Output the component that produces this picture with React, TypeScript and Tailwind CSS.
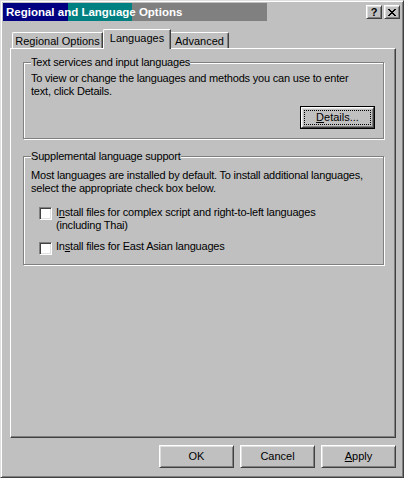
const raised =
  "border border-t-white border-l-white border-r-[#404040] border-b-[#404040] shadow-[inset_1px_1px_0_#dfdfdf,inset_-1px_-1px_0_#808080]";

function PushButton({ children, isDefault }: { children: React.ReactNode; isDefault?: boolean }) {
  if (isDefault) {
    return (
      <div className="w-[75px] h-[23px] border border-black">
        <div className={`h-full w-full ${raised} p-[2px]`}>
          <div className="h-full w-full border border-dotted border-black flex items-center justify-center text-[11px] leading-[13px]">
            {children}
          </div>
        </div>
      </div>
    );
  }
  return (
    <div className={`w-[75px] h-[23px] ${raised} flex items-center justify-center text-[11px] leading-[13px]`}>
      {children}
    </div>
  );
}

function CheckBox() {
  return (
    <div className="w-[13px] h-[13px] shrink-0 bg-white border border-t-[#808080] border-l-[#808080] border-r-white border-b-white shadow-[inset_1px_1px_0_#404040,inset_-1px_-1px_0_#dfdfdf]" />
  );
}

export default function App() {
  return (
    <div className="w-[404px] h-[478px] bg-[#c0c0c0] border border-t-[#dfdfdf] border-l-[#dfdfdf] border-r-[#404040] border-b-[#404040] shadow-[inset_1px_1px_0_#fff,inset_-1px_-1px_0_#808080] p-[2px] overflow-hidden font-['Liberation_Sans',Arial,sans-serif] text-black">
      {/* Title bar */}
      <div className="h-[18px] flex items-center bg-[linear-gradient(to_right,#000080_0px,#000080_65px,#008080_65px,#008080_129px,#808080_129px,#808080_264px,#c0c0c0_264px)]">
        <span className="ml-[3px] text-white font-bold text-[11.5px] leading-[14px]">Regional and Language Options</span>
        <div className="ml-auto mr-[1px] flex gap-[2px]">
          <div className={`w-[16px] h-[14px] ${raised} flex items-center justify-center font-bold text-[11px] leading-none pt-px`}>?</div>
          <div className={`w-[16px] h-[14px] ${raised} flex items-center justify-center`}>
            <svg width="8" height="7" viewBox="0 0 8 7" shapeRendering="crispEdges">
              <path d="M0 0h2v1h-2zM6 0h2v1h-2zM1 1h2v1h-2zM5 1h2v1h-2zM2 2h4v1h-4zM3 3h2v1h-2zM2 4h4v1h-4zM1 5h2v1h-2zM5 5h2v1h-2zM0 6h2v1h-2zM6 6h2v1h-2z" fill="#000" />
            </svg>
          </div>
        </div>
      </div>

      <div className="ml-[7px] w-[386px]">
        {/* Tabs */}
        <div className="mt-[8px] h-[19px] flex items-end text-[11px] leading-[13px]">
          <div className="ml-[2px] w-[91px] h-[16px] border-l border-t border-white rounded-tl-[2px] border-r border-r-[#404040] shadow-[inset_-1px_0_0_#808080] flex items-center justify-center pt-[2px]">
            Regional Options
          </div>
          <div className="relative z-10 w-[68px] h-[20px] -mb-px bg-[#c0c0c0] border-l border-t border-white rounded-tl-[2px] border-r border-r-[#404040] shadow-[inset_-1px_0_0_#808080] flex items-center justify-center pb-[2px]">
            Languages
          </div>
          <div className="w-[58px] h-[16px] border-t border-white border-r border-r-[#404040] rounded-tr-[2px] shadow-[inset_-1px_0_0_#808080] flex items-center justify-center pt-[2px]">
            Advanced
          </div>
        </div>

        {/* Tab panel */}
        <div className="h-[390px] border border-t-white border-l-white border-r-[#404040] border-b-[#404040] shadow-[inset_-1px_-1px_0_#808080] pl-[12px] pt-[7px] text-[11px] leading-[13px] tracking-[-0.2px] whitespace-nowrap">
          <fieldset className="w-[361px] h-[83px] border border-[#808080] shadow-[inset_1px_1px_0_#fff,1px_1px_0_#fff] px-[7px]">
            <legend className="px-0 bg-[#c0c0c0]">Text services and input languages</legend>
            <p className="pt-[3px]">
              To view or change the languages and methods you can use to enter
              <br />
              text, click Details.
            </p>
            <div className="mt-[8px] flex justify-end mr-[1px] tracking-normal">
              <PushButton isDefault>
                <span>
                  <u>D</u>etails...
                </span>
              </PushButton>
            </div>
          </fieldset>

          <fieldset className="mt-[11px] w-[361px] h-[115px] border border-[#808080] shadow-[inset_1px_1px_0_#fff,1px_1px_0_#fff] px-[7px]">
            <legend className="px-0 bg-[#c0c0c0]">Supplemental language support</legend>
            <p className="pt-[6px]">
              Most languages are installed by default. To install additional languages,
              <br />
              select the appropriate check box below.
            </p>
            <div className="mt-[11px] ml-[8px] flex gap-[4px]">
              <div className="pt-px">
                <CheckBox />
              </div>
              <span>
                I<u>n</u>stall files for complex script and right-to-left languages
                <br />
                (including Thai)
              </span>
            </div>
            <div className="mt-[8px] ml-[8px] flex gap-[4px]">
              <div className="pt-[2px]">
                <CheckBox />
              </div>
              <span>
                In<u>s</u>tall files for East Asian languages
              </span>
            </div>
          </fieldset>
        </div>

        {/* Dialog buttons */}
        <div className="mt-[7px] flex justify-end gap-[6px]">
          <PushButton>OK</PushButton>
          <PushButton>Cancel</PushButton>
          <PushButton>
            <span>
              <u>A</u>pply
            </span>
          </PushButton>
        </div>
      </div>
    </div>
  );
}
